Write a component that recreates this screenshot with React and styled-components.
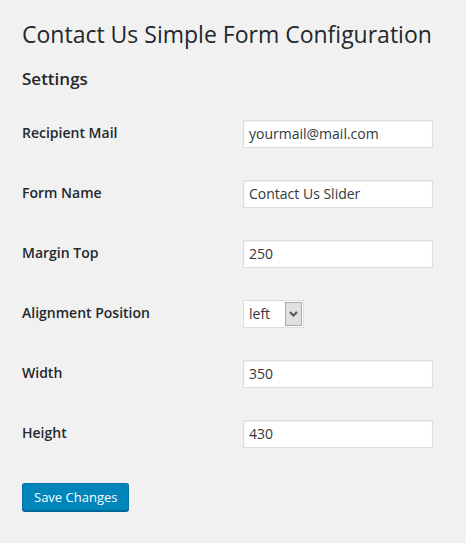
import React from "react";
import styled, { createGlobalStyle } from "styled-components";

const Global = createGlobalStyle`
  html, body { margin: 0; padding: 0; background: #f1f1f1; }
  body { font-family: "Open Sans", "Noto Sans", sans-serif; color: #23282d; font-size: 13px; }
`;

const Wrap = styled.div`
  padding: 15px 22px 30px 22px;
  display: flex;
  flex-direction: column;
`;

const Title = styled.h2`
  margin: 0;
  font-size: 23px;
  font-weight: 400;
  line-height: 29px;
  padding: 5px 0 4px;
`;

const SubTitle = styled.h3`
  margin: 15px 0 0;
  font-size: 17px;
  font-weight: 600;
  line-height: 22px;
`;

const Table = styled.div`
  display: flex;
  flex-direction: column;
  margin-top: 15px;
`;

const Row = styled.div`
  display: grid;
  grid-template-columns: 221px 1fr;
  height: 60px;
`;

const Label = styled.div`
  padding-top: 19px;
  font-size: 14px;
  font-weight: 600;
  line-height: 1.3;
`;

const Cell = styled.div`
  padding-top: 15px;
`;

const TextInput = styled.div`
  box-sizing: border-box;
  width: 190px;
  height: 28px;
  background: #fff;
  border: 1px solid #ddd;
  box-shadow: inset 0 1px 2px rgba(0,0,0,0.07);
  font-size: 14px;
  line-height: 26px;
  padding: 0 5px;
  color: #32373c;
`;

const Select = styled.div`
  box-sizing: border-box;
  width: 61px;
  height: 28px;
  background: #fff;
  border: 1px solid #ddd;
  display: flex;
  align-items: stretch;
  font-size: 14px;
  color: #32373c;
`;

const SelectValue = styled.span`
  flex: 1;
  line-height: 26px;
  padding-left: 5px;
`;

const Arrow = styled.span`
  width: 15px;
  margin: 1px;
  background: #e0e0e0;
  border: 1px solid #a8a8a8;
  display: flex;
  align-items: center;
  justify-content: center;
`;

const Button = styled.div`
  align-self: flex-start;
  margin-top: 18px;
  box-sizing: border-box;
  height: 28px;
  padding: 0 11px 1px;
  background: #0085ba;
  border: 1px solid #0073aa;
  border-bottom-color: #006799;
  box-shadow: 0 1px 0 #006799;
  border-radius: 3px;
  color: #fff;
  font-size: 13px;
  line-height: 26px;
`;

const fields = [
  ["Recipient Mail", "yourmail@mail.com"],
  ["Form Name", "Contact Us Slider"],
  ["Margin Top", "250"],
  ["Alignment Position", null],
  ["Width", "350"],
  ["Height", "430"],
];

export default function App() {
  return (
    <>
      <Global />
      <Wrap>
        <Title>Contact Us Simple Form Configuration</Title>
        <SubTitle>Settings</SubTitle>
        <Table>
          {fields.map(([label, value]) => (
            <Row key={label}>
              <Label>{label}</Label>
              <Cell>
                {value === null ? (
                  <Select>
                    <SelectValue>left</SelectValue>
                    <Arrow>
                      <svg width="9" height="6" viewBox="0 0 9 6">
                        <path d="M1 1 L4.5 4.5 L8 1" stroke="#555" strokeWidth="2" fill="none" />
                      </svg>
                    </Arrow>
                  </Select>
                ) : (
                  <TextInput>{value}</TextInput>
                )}
              </Cell>
            </Row>
          ))}
        </Table>
        <Button>Save Changes</Button>
      </Wrap>
    </>
  );
}
